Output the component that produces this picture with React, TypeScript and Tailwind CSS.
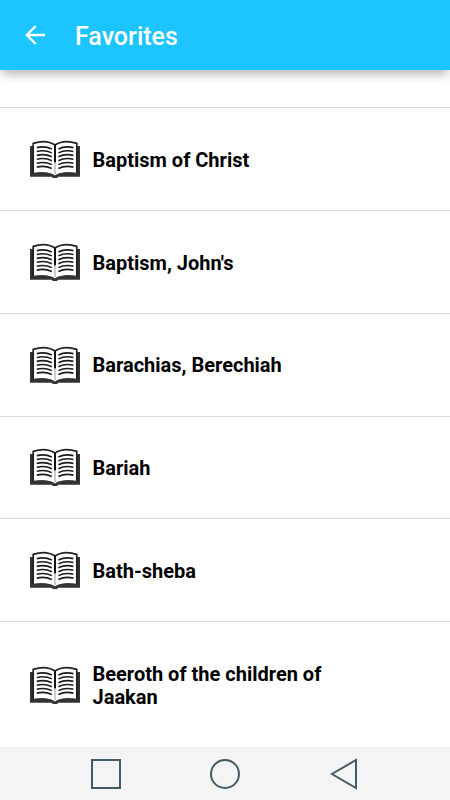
const favorites = [
  "Baptism of Christ",
  "Baptism, John's",
  "Barachias, Berechiah",
  "Bariah",
  "Bath-sheba",
  "Beeroth of the children of Jaakan",
];

const lineOffsets = [0, 3.9, 7.8, 11.7, 15.6, 19.5];

function BookIcon() {
  return (
    <svg className="h-[38px] w-[50px] shrink-0" viewBox="0 0 50 38" fill="none">
      <path
        d="M0 6h3v26h44V6h3v30.7H28.5Q27.5 38.2 25 38.2T21.5 36.7H0z"
        fill="#333"
      />
      <path
        d="M3 3.3Q16-1.2 25 5Q34-1.2 47 3.3V33Q33 30.6 25 35.4Q17 30.6 3 33z"
        fill="#fff"
      />
      <path
        d="M3.2 33V3.4Q16-1 25 5Q34-1 46.8 3.4V33"
        stroke="#222"
        strokeWidth="1.7"
      />
      <path d="M3 33Q17 30.6 25 35.4Q33 30.6 47 33V35H3z" fill="#333" />
      <path d="M25 4.5v18" stroke="#111" strokeWidth="2" />
      <path d="M25 22.5v11.5" stroke="#aaa" strokeWidth="1.2" />
      {lineOffsets.map((offset) => (
        <g
          key={offset}
          transform={`translate(0 ${offset})`}
          stroke="#1c1c1c"
          strokeWidth="1.6"
        >
          <path d="M6.8 7.6Q15 5.6 21.8 9" />
          <path d="M28.4 9Q35 5.6 43.4 7.6" />
        </g>
      ))}
    </svg>
  );
}

function FavoriteRow({ title }: { title: string }) {
  return (
    <li className="flex min-h-[102.83px] items-center border-t border-[#dadada] pr-[90px] pl-[30px] last:min-h-[126px]">
      <BookIcon />
      <span className="mt-[3px] ml-[12.5px] text-[20px] leading-[23.4px] font-bold text-black">
        {title}
      </span>
    </li>
  );
}

export default function App() {
  return (
    <div className="flex h-[800px] w-[450px] flex-col overflow-hidden bg-white font-['Roboto',sans-serif]">
      <header className="z-10 flex h-[70px] shrink-0 items-center bg-[#1cc5ff] pl-[25px] text-white shadow-[0_6px_10px_-2px_rgba(0,0,0,0.3)]">
        <svg
          className="h-5 w-5"
          viewBox="0 0 20 20"
          fill="none"
          stroke="currentColor"
          strokeWidth="2.4"
        >
          <path d="M20 10H2M10.7 1L1.8 10l8.9 9" />
        </svg>
        <h1 className="mt-[3px] ml-[30px] text-[25px] leading-[30px] font-medium">
          Favorites
        </h1>
      </header>

      <ul className="flex-1 overflow-hidden pt-[37.1px]">
        {favorites.map((title) => (
          <FavoriteRow key={title} title={title} />
        ))}
      </ul>

      <nav className="flex h-[53px] shrink-0 items-center bg-[#f4f4f4] pl-[90px]">
        <svg
          className="h-8 w-[270px]"
          viewBox="0 0 270 32"
          fill="none"
          stroke="#465a65"
          strokeWidth="2"
        >
          <path d="M2 2h28v28H2z" />
          <circle cx="135" cy="16" r="14" />
          <path d="M266 2v28L242 16z" />
        </svg>
      </nav>
    </div>
  );
}
